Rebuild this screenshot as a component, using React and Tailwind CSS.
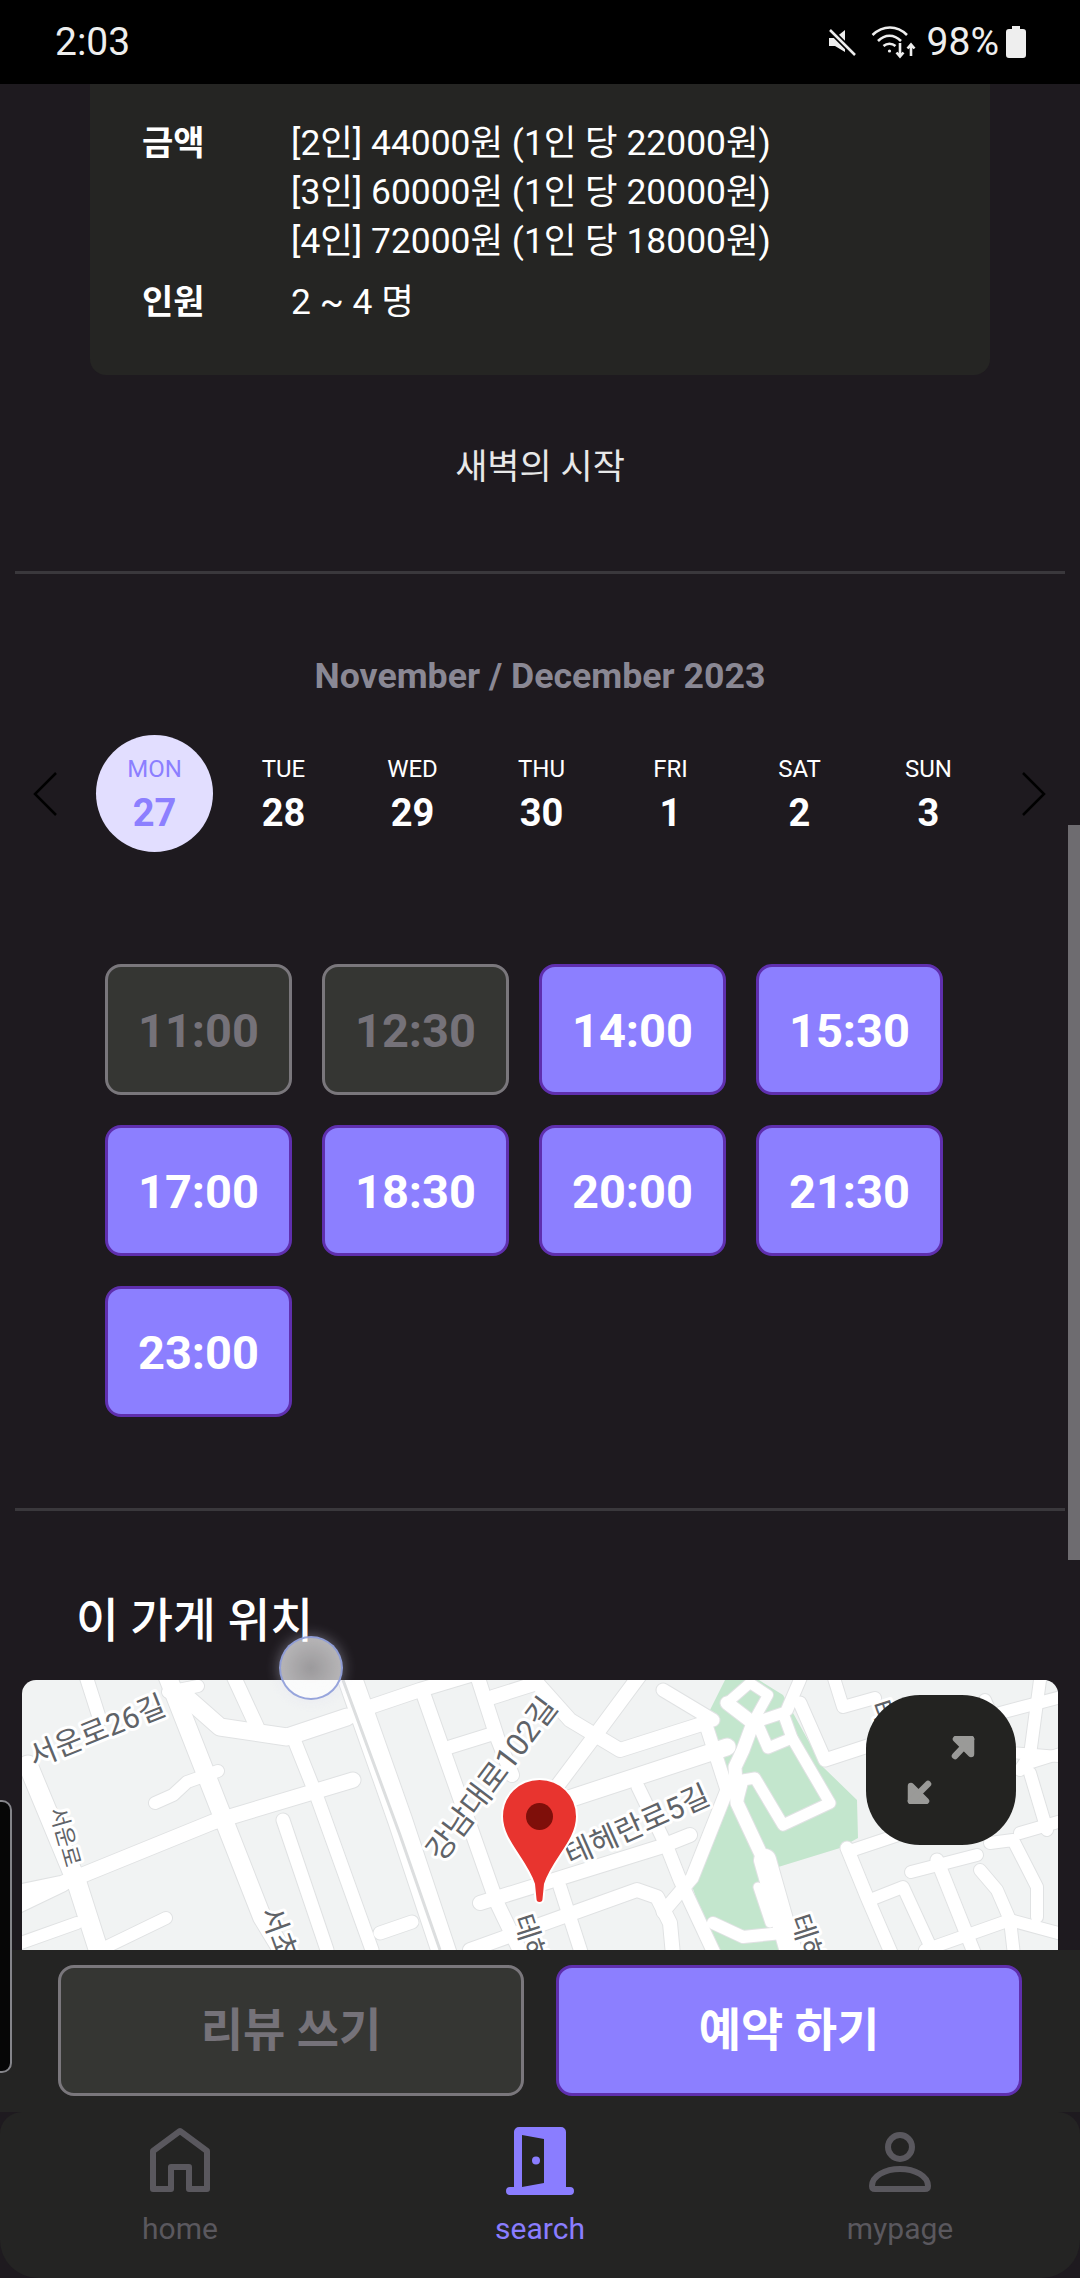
import * as React from "react";

const days = [
  { name: "MON", num: "27", active: true },
  { name: "TUE", num: "28" },
  { name: "WED", num: "29" },
  { name: "THU", num: "30" },
  { name: "FRI", num: "1" },
  { name: "SAT", num: "2" },
  { name: "SUN", num: "3" },
];

const times = [
  { t: "11:00", off: true },
  { t: "12:30", off: true },
  { t: "14:00" },
  { t: "15:30" },
  { t: "17:00" },
  { t: "18:30" },
  { t: "20:00" },
  { t: "21:30" },
  { t: "23:00" },
];

// roads, in page coordinates: [path, width]
const roads = [
  ["M165 1670L220 1810L262 1917L285 1955", 18],
  ["M84 1670L100 1720", 13],
  ["M28 1765L77 1883L100 1955", 19],
  ["M15 1893L63 1883L213 1822L353 1780", 15],
  ["M347 1670L400 1820L445 1955", 24],
  ["M233 1675L257 1727", 14],
  ["M187 1698L220 1727L287 1737L347 1717", 17],
  ["M168 1692L198 1686", 12],
  ["M293 1737L317 1797L372 1950", 13],
  ["M283 1820L327 1950", 13],
  ["M155 1803L173 1795L187 1782L218 1771", 12],
  ["M15 1945L77 1923", 12],
  ["M100 1950L166 1918", 12],
  ["M15 1908L63 1885", 13],
  ["M355 1712L420 1690L470 1675", 14],
  ["M423 1693L497 1903L522 1955", 14],
  ["M450 1747L495 1733", 13],
  ["M477 1675L497 1737L512 1775", 14],
  ["M493 1697L537 1683L570 1720L620 1750L705 1723", 14],
  ["M640 1675L597 1733L558 1785", 14],
  ["M663 1690L713 1720", 13],
  ["M520 1815L727 1747", 17],
  ["M480 1903L660 1847L690 1835", 14],
  ["M470 1950L637 1890L657 1897L670 1923L673 1955", 14],
  ["M638 1787L667 1847L680 1880L715 1955", 13],
  ["M705 1722L727 1790L692 1878L663 1912", 13],
  ["M560 1887L582 1955", 13],
  ["M380 1933L412 1922", 13],
  ["M727 1703L753 1723L743 1750L735 1767L737 1803L767 1867", 13],
  ["M765 1860L792 1955", 22],
  ["M727 1703L750 1683L768 1695L753 1722", 10],
  ["M758 1725L768 1748L792 1738L783 1713L753 1723", 11],
  ["M792 1738L830 1803L783 1825L755 1778L743 1780L737 1803", 11],
  ["M787 1710L802 1675", 12],
  ["M758 1887L770 1923", 9],
  ["M713 1923L743 1937L782 1933", 12],
  ["M800 1703L825 1760L880 1742", 13],
  ["M833 1675L843 1707L875 1698", 12],
  ["M1000 1713L1065 1696", 12],
  ["M1040 1680L1030 1755L1020 1770", 12],
  ["M1030 1763L1065 1752", 11],
  ["M1017 1753L1065 1757", 11],
  ["M847 1848L867 1897L892 1955", 13],
  ["M853 1850L913 1830", 12],
  ["M870 1900L903 1887L932 1950", 12],
  ["M911 1872L977 1855", 12],
  ["M937 1860L975 1955", 13],
  ["M980 1870L997 1890L1010 1920L1014 1955", 12],
  ["M925 1950L1010 1920L1065 1935", 12],
  ["M990 1843L1013 1840L1037 1887L1037 1917", 12],
  ["M1020 1833L1065 1820", 12],
  ["M1030 1773L1047 1830", 12],
  ["M985 1700L1000 1735", 12],
];

const labels = [
  { text: "서운로26길", x: 97, y: 1731, r: -22, size: 30 },
  { text: "서운로", x: 65, y: 1837, r: 74, size: 22 },
  { text: "서초대로", x: 288, y: 1958, r: 70, size: 29 },
  { text: "강남대로102길", x: 492, y: 1779, r: -53, size: 31 },
  { text: "테헤란로5길", x: 637, y: 1825, r: -24, size: 30 },
  { text: "테헤란로", x: 538, y: 1964, r: 72, size: 28 },
  { text: "테헤란로", x: 815, y: 1964, r: 72, size: 28 },
  { text: "테헤란로", x: 895, y: 1750, r: 72, size: 28 },
];

function MapArt() {
  return (
    <svg viewBox="22 1680 1036 270" className="block w-[1036px] h-[270px]">
      <path d="M730 1670L705 1720L727 1787L690 1880L717 1960H800L775 1868L840 1848L858 1838L857 1800L823 1767L783 1695L743 1670Z" fill="#c3e6cd" />
      {roads.map(([d, w], i) => (
        <path key={"e" + i} d={d} fill="none" stroke="#e0e2e3" strokeWidth={w + 2} strokeLinecap="round" strokeLinejoin="round" />
      ))}
      {roads.map(([d, w], i) => (
        <path key={"r" + i} d={d} fill="none" stroke="#ffffff" strokeWidth={w} strokeLinecap="round" strokeLinejoin="round" />
      ))}
      <path d="M343 1680L400 1835L440 1950" fill="none" stroke="#dcdedf" strokeWidth="3" />
      {labels.map((l, i) => (
        <text
          key={i}
          x={l.x}
          y={l.y}
          textAnchor="middle"
          dominantBaseline="central"
          transform={`rotate(${l.r} ${l.x} ${l.y})`}
          fontSize={l.size}
          fill="#5f6368"
          stroke="#ffffff"
          strokeWidth="6"
          strokeLinejoin="round"
          className="[paint-order:stroke] font-['Roboto','Noto_Sans_CJK_KR',sans-serif]"
        >
          {l.text}
        </text>
      ))}
      <path
        d="M539.5 1779C518.5 1779 502 1795.5 502 1816.5C502 1841 526 1859 534 1884L535.5 1899A4 4 0 0 0 543.5 1899L545 1884C553 1859 577 1841 577 1816.5C577 1795.5 560.5 1779 539.5 1779Z"
        fill="#e8342f"
        stroke="#ffffff"
        strokeWidth="2"
      />
      <circle cx="539.5" cy="1816.5" r="13.5" fill="#7f0f0a" />
    </svg>
  );
}

export default function App() {
  return (
    <div className="relative w-[1080px] h-[2278px] overflow-hidden flex flex-col bg-[#1e1a1f] text-white font-['Roboto','Noto_Sans_CJK_KR',sans-serif]">
      {/* Status bar */}
      <div className="h-[84px] shrink-0 bg-black flex items-center pl-[55px] pr-[54px] text-[#eeeeee]">
        <span className="text-[39px] leading-none">2:03</span>
        <div className="ml-auto flex items-center">
          <svg width="30" height="30" viewBox="0 0 30 30">
            <path d="M1 11H7L17 3V25L7 19H1Z" fill="#eeeeee" />
            <path d="M1 2L28 29" stroke="#000" strokeWidth="6" />
            <path d="M2 3L27 28" stroke="#eeeeee" strokeWidth="2.5" />
          </svg>
          <svg width="46" height="34" viewBox="0 0 46 34" className="ml-[13px]" fill="none" stroke="#eeeeee" strokeWidth="2.6">
            <path d="M1.5 10C12 0 26 0 36 10" />
            <path d="M7 16C14 9 23 9 30 16" />
            <path d="M12.5 21C16 18 21 18 24.5 21" />
            <circle cx="18.5" cy="26" r="1.6" fill="#eeeeee" stroke="none" />
            <path d="M29 18V31M25.5 27.5L29 31.5L32.5 27.5" />
            <path d="M40 31V20M36.5 23.5L40 19.5L43.5 23.5" />
          </svg>
          <span className="ml-[10px] text-[39px] leading-none">98%</span>
          <svg width="20" height="32" viewBox="0 0 20 32" className="ml-[7px]">
            <path d="M6 0H14V3H17A3 3 0 0 1 20 6V29A3 3 0 0 1 17 32H3A3 3 0 0 1 0 29V6A3 3 0 0 1 3 3H6Z" fill="#eeeeee" />
          </svg>
        </div>
      </div>

      {/* Scrolled content */}
      <div className="flex-1 min-h-0 overflow-hidden">
        <div className="mx-[90px] bg-[#252523] rounded-b-[16px] pt-[35px] pb-[48px] px-[52px] text-[35.4px] leading-[49px]">
          <div className="flex">
            <span className="w-[149px] text-[34px] font-bold">금액</span>
            <div>
              <p>[2인] 44000원 (1인 당 22000원)</p>
              <p>[3인] 60000원 (1인 당 20000원)</p>
              <p>[4인] 72000원 (1인 당 18000원)</p>
            </div>
          </div>
          <div className="flex mt-[12px]">
            <span className="w-[149px] text-[34px] font-bold">인원</span>
            <span>2 ~ 4 명</span>
          </div>
        </div>

        <p className="mt-[68px] text-center text-[35px] leading-[49px] text-[#e8e8e8]">새벽의 시작</p>
        <div className="mt-[79px] mx-[15px] h-[3px] bg-[#3a383c]" />

        <p className="mt-[82px] text-center text-[35.7px] leading-[40px] font-bold text-[#8a8894]">November / December 2023</p>

        {/* Week */}
        <div className="mt-[39px] flex items-center pl-[33px]">
          <svg width="24" height="44" viewBox="0 0 24 44" fill="none" stroke="#000" strokeWidth="2.5">
            <path d="M23 1L2 22L23 43" />
          </svg>
          <div className="ml-[33px] w-[903px] grid grid-cols-7">
            {days.map((d) => (
              <div key={d.name} className="flex justify-center">
                <div className={`w-[117px] h-[117px] rounded-full flex flex-col items-center pt-[19px] ${d.active ? "bg-[#e2deff] text-[#8c7fff]" : "text-white"}`}>
                  <span className="text-[24px] leading-[30px]">{d.name}</span>
                  <span className="mt-[6px] text-[38px] leading-[46px] font-bold">{d.num}</span>
                </div>
              </div>
            ))}
          </div>
          <svg width="24" height="44" viewBox="0 0 24 44" className="ml-[29px]" fill="none" stroke="#000" strokeWidth="2.5">
            <path d="M1 1L22 22L1 43" />
          </svg>
        </div>

        {/* Times */}
        <div className="mt-[112px] mx-[105px] grid grid-cols-[repeat(4,187px)] auto-rows-[131px] gap-[30px]">
          {times.map((s) => (
            <div
              key={s.t}
              className={`rounded-[16px] border-[3px] flex items-center justify-center pt-[4px] text-[47px] font-bold ${
                s.off ? "bg-[#353633] border-[#7a777c] text-[#757279]" : "bg-[#8c7fff] border-[#5f2fae] text-white"
              }`}
            >
              {s.t}
            </div>
          ))}
        </div>

        <div className="mt-[91px] mx-[15px] h-[3px] bg-[#3a383c]" />

        <h2 className="mt-[84px] ml-[76px] text-[46.5px] leading-[52px] font-medium">이 가게 위치</h2>

        {/* Map */}
        <div className="relative mt-[33px] mx-[22px] h-[300px] bg-[#f1f3f3] rounded-[14px] overflow-hidden">
          <MapArt />
          <div className="absolute top-[15px] right-[42px] w-[150px] h-[150px] rounded-[54px] bg-[#232321] flex items-center justify-center">
            <svg width="68" height="68" viewBox="0 0 68 68" fill="none" stroke="#9a9a98" strokeWidth="6.5" strokeLinecap="round" strokeLinejoin="round">
              <path d="M49 3H64V18Z" fill="#9a9a98" />
              <path d="M64 3L48 20" />
              <path d="M4 65V50L19 65Z" fill="#9a9a98" />
              <path d="M4 65L21 48" />
            </svg>
          </div>
        </div>
      </div>

      {/* Action buttons */}
      <div className="h-[162px] shrink-0 bg-[#242423] flex gap-[32px] pl-[58px] pt-[15px]">
        <div className="w-[466px] h-[131px] rounded-[16px] border-[3px] border-[#7a777c] bg-[#353633] text-[#757279] flex items-center justify-center text-[46px] font-bold">
          리뷰 쓰기
        </div>
        <div className="w-[466px] h-[131px] rounded-[16px] border-[3px] border-[#5f2fae] bg-[#8c7fff] text-white flex items-center justify-center text-[46px] font-bold">
          예약 하기
        </div>
      </div>

      {/* Bottom nav */}
      <div className="h-[166px] shrink-0 bg-[#242423] rounded-t-[22px] rounded-b-[38px] grid grid-cols-3 pt-[15px] text-[30px] text-[#5a585e]">
        <div className="flex flex-col items-center">
          <svg width="60" height="68" viewBox="0 0 60 68" fill="none" stroke="#5a585e" strokeWidth="6" strokeLinejoin="round">
            <path d="M30 4L57 24V62H39V40H21V62H3V24Z" />
          </svg>
          <span className="mt-[14px] leading-[40px]">home</span>
        </div>
        <div className="flex flex-col items-center text-[#8a7dff]">
          <svg width="68" height="68" viewBox="0 0 68 68">
            <path d="M13 0H55A5 5 0 0 1 60 5V60H64A4 4 0 0 1 64 68H4A4 4 0 0 1 4 60H8V5A5 5 0 0 1 13 0Z" fill="#8a7dff" />
            <path d="M16 8L38 12V56L16 60Z" fill="#242423" />
            <circle cx="30" cy="33.5" r="4" fill="#8a7dff" />
          </svg>
          <span className="mt-[14px] leading-[40px]">search</span>
        </div>
        <div className="flex flex-col items-center">
          <svg width="62" height="68" viewBox="0 0 62 68" fill="none" stroke="#5a585e" strokeWidth="6" strokeLinejoin="round">
            <circle cx="31" cy="20" r="12" />
            <path d="M6 62H56Q59 62 59 59C59 49 46 42 31 42C16 42 3 49 3 59Q3 62 6 62Z" />
          </svg>
          <span className="mt-[14px] leading-[40px]">mypage</span>
        </div>
      </div>

      {/* Overlays */}
      <div className="absolute top-[825px] right-0 w-[12px] h-[735px] bg-[#6e6c70]" />
      <div className="absolute left-[-20px] top-[1800px] w-[32px] h-[273px] rounded-[10px] border-2 border-[#85858a] bg-[#060606]" />
      <div className="absolute left-[279px] top-[1636px] w-[64px] h-[64px] rounded-full border-2 border-[#8c9bd8]/90 bg-[radial-gradient(circle,rgba(255,255,255,0.56),rgba(255,255,255,0.72))] shadow-[0_0_14px_rgba(220,220,240,0.4)]" />
    </div>
  );
}
